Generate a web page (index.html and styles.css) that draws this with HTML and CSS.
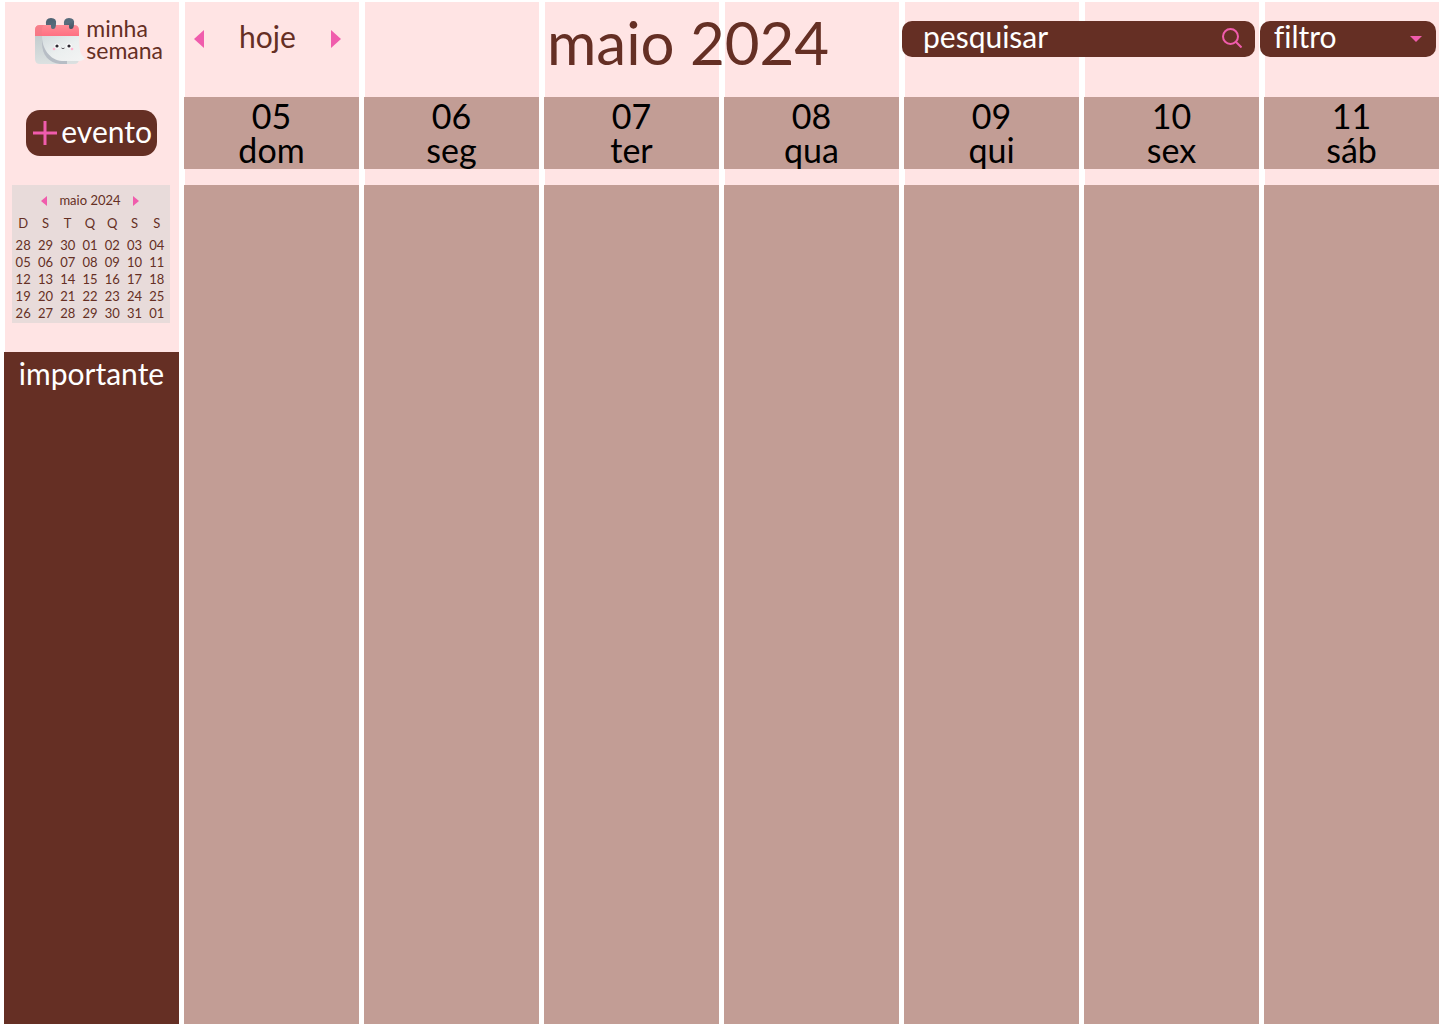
FILE: index.html
```html
<!DOCTYPE html>
<html lang="pt-BR">
<head>
<meta charset="utf-8">
<meta name="viewport" content="width=device-width, initial-scale=1">
<title>minha semana</title>
<link rel="stylesheet" href="styles.css">
</head>
<body>
<div class="board">
  <div class="stripe"></div><div class="stripe"></div><div class="stripe"></div><div class="stripe"></div>
  <div class="stripe"></div><div class="stripe"></div><div class="stripe"></div><div class="stripe"></div>

  <aside class="sidebar">
    <div class="brand">
      <svg class="brand-icon" width="50" height="48" viewBox="0 0 50 48" aria-hidden="true">
        <defs>
          <linearGradient id="back" x1="0" y1="0" x2="0" y2="1"><stop offset="0" stop-color="#c3ccce"/><stop offset="1" stop-color="#dce1e1"/></linearGradient>
          <linearGradient id="page" x1="0" y1="0" x2="1" y2="1"><stop offset="0" stop-color="#d3dbdd"/><stop offset="0.5" stop-color="#ebefef"/><stop offset="1" stop-color="#f4f4f4"/></linearGradient>
          <linearGradient id="red" x1="0" y1="0" x2="0" y2="1"><stop offset="0" stop-color="#ff8c96"/><stop offset="1" stop-color="#ff7082"/></linearGradient>
          <linearGradient id="ring" x1="0" y1="0" x2="1" y2="1"><stop offset="0" stop-color="#4b6070"/><stop offset="0.6" stop-color="#5a6e7e"/><stop offset="1" stop-color="#3f4d5d"/></linearGradient>
        </defs>
        <path d="M0 18h44v24q0 5-5 5H5q-5 0-5-5z" fill="url(#back)"/>
        <path d="M7 18v8c0 12 7 20 18 21h7V36z" fill="#b7bdc5"/>
        <path d="M7 19h37c0 12 1 19 6 22q-2 3-6 3H27C15 43 7 32 7 19z" fill="url(#page)"/>
        <path d="M5 8h34q5 0 5 5v6H0v-6q0-5 5-5z" fill="url(#red)"/>
        <path d="M9 8q-3 2-2 11H0v-6q0-5 5-5z" fill="#f27a85" opacity="0.6"/>
        <path d="M11 8q-1-7 5-7t5 6q0 5-3 5c-2 0-2-1-2-4h-5zM29 8q-1-7 5-7t5 6q0 5-3 5c-2 0-2-1-2-4h-5z" fill="url(#ring)"/>
        <circle cx="22" cy="29" r="2.6" fill="#fff"/><circle cx="34" cy="29" r="2.6" fill="#fff"/>
        <circle cx="22" cy="29" r="1.6" fill="#2b2730"/><circle cx="34" cy="29" r="1.6" fill="#2b2730"/>
        <circle cx="19" cy="32" r="1.3" fill="#ffb5cf"/><circle cx="37" cy="32" r="1.3" fill="#ffb5cf"/>
        <path d="M26.500 31q1.500 1.400 3 0" fill="none" stroke="#4d4852" stroke-width="0.9"/>
      </svg>
      <p class="brand-name">minha<br>semana</p>
    </div>

    <button class="add-event" type="button">
      <svg width="24" height="24" viewBox="0 0 24 24" aria-hidden="true"><path d="M12 0v24M0 12h24" stroke="#f05cac" stroke-width="3"/></svg>
      <span>evento</span>
    </button>

    <section class="mini">
      <div class="mini-head">
        <button class="arrow" type="button" aria-label="mês anterior"><svg width="6" height="10" viewBox="0 0 6 10"><path d="M6 0v10L0 5z"/></svg></button>
        <span>maio 2024</span>
        <button class="arrow" type="button" aria-label="próximo mês"><svg width="6" height="10" viewBox="0 0 6 10"><path d="M0 0v10l6-5z"/></svg></button>
      </div>
      <table class="mini-table">
        <thead><tr><th>D</th><th>S</th><th>T</th><th>Q</th><th>Q</th><th>S</th><th>S</th></tr></thead>
        <tbody>
          <tr><td>28</td><td>29</td><td>30</td><td>01</td><td>02</td><td>03</td><td>04</td></tr>
          <tr><td>05</td><td>06</td><td>07</td><td>08</td><td>09</td><td>10</td><td>11</td></tr>
          <tr><td>12</td><td>13</td><td>14</td><td>15</td><td>16</td><td>17</td><td>18</td></tr>
          <tr><td>19</td><td>20</td><td>21</td><td>22</td><td>23</td><td>24</td><td>25</td></tr>
          <tr><td>26</td><td>27</td><td>28</td><td>29</td><td>30</td><td>31</td><td>01</td></tr>
        </tbody>
      </table>
    </section>

    <section class="important"><h2>importante</h2></section>
  </aside>

  <nav class="week-nav">
    <button class="arrow" type="button" aria-label="semana anterior"><svg width="10" height="18" viewBox="0 0 10 18"><path d="M10 0v18L0 9z"/></svg></button>
    <button class="today" type="button">hoje</button>
    <button class="arrow" type="button" aria-label="próxima semana"><svg width="10" height="18" viewBox="0 0 10 18"><path d="M0 0v18l10-9z"/></svg></button>
  </nav>

  <h1 class="month">maio 2024</h1>

  <form class="tools">
    <div class="field search">
      <input type="search" placeholder="pesquisar" aria-label="pesquisar">
      <svg width="20" height="20" viewBox="0 0 20 20" aria-hidden="true"><g fill="none" stroke="#f05cac" stroke-width="2"><circle cx="8.500" cy="8.500" r="7.500"/><path d="M13.500 13.500l6 6"/></g></svg>
    </div>
    <div class="field filter">
      <select aria-label="filtro"><option>filtro</option></select>
      <svg width="12" height="6" viewBox="0 0 12 6" aria-hidden="true"><path d="M0 0h12L6 6z" fill="#f05cac"/></svg>
    </div>
  </form>

  <h2 class="day">05<br>dom</h2>
  <h2 class="day">06<br>seg</h2>
  <h2 class="day">07<br>ter</h2>
  <h2 class="day">08<br>qua</h2>
  <h2 class="day">09<br>qui</h2>
  <h2 class="day">10<br>sex</h2>
  <h2 class="day">11<br>sáb</h2>

  <div class="slot"></div><div class="slot"></div><div class="slot"></div><div class="slot"></div>
  <div class="slot"></div><div class="slot"></div><div class="slot"></div>
</div>
</body>
</html>
```
FILE: styles.css
```css
* { box-sizing: border-box; }

body {
  margin: 0;
  background: #fff;
  color: #652f24;
  font-family: Lato, "Liberation Sans", sans-serif;
  font-variant-ligatures: none;
}

h1, h2, p { margin: 0; font-weight: 400; }

button, input, select {
  margin: 0;
  padding: 0;
  border: 0;
  background: none;
  color: inherit;
  font: inherit;
  font-variant-ligatures: none;
}

svg { display: block; flex: none; }

.board {
  display: grid;
  grid-template-columns: repeat(8, minmax(0, 1fr));
  grid-template-rows: 95px 72px 16px 1fr;
  column-gap: 5px;
  min-height: 100vh;
  padding: 2px 1px 0 4px;
}

/* pale columns behind everything */
.stripe { grid-row: 1 / -1; margin-left: 1px; background: #ffe4e4; }
.stripe:nth-child(1) { grid-column: 1; }
.stripe:nth-child(2) { grid-column: 2; }
.stripe:nth-child(3) { grid-column: 3; }
.stripe:nth-child(4) { grid-column: 4; }
.stripe:nth-child(5) { grid-column: 5; }
.stripe:nth-child(6) { grid-column: 6; }
.stripe:nth-child(7) { grid-column: 7; }
.stripe:nth-child(8) { grid-column: 8; }

.sidebar {
  grid-area: 1 / 1 / -1 / 2;
  display: flex;
  flex-direction: column;
  align-items: center;
}

.brand {
  display: flex;
  gap: 1px;
  align-self: flex-end;
  height: 48px;
  margin: 15px 16px 0 0;
}
.brand-name { font-size: 23px; line-height: 22px; }

.add-event {
  display: flex;
  align-items: center;
  justify-content: flex-end;
  gap: 4px;
  height: 46px;
  width: 131px;
  margin-top: 45px;
  padding-right: 5px;
  border-radius: 14px;
  background: #652f24;
  color: #fff;
  font-size: 30px;
}
.add-event span { padding-bottom: 4px; }

.mini {
  align-self: stretch;
  margin: 29px 9px 0 8px;
  padding: 7px 2px 0 0;
  height: 138px;
  background: #e8dbda;
  font-size: 13px;
  line-height: 17px;
}
.mini-head { display: flex; justify-content: center; align-items: center; gap: 12px; }
.mini-table { width: 100%; border-collapse: collapse; table-layout: fixed; }
.mini-table th, .mini-table td { padding: 0; font-weight: 400; text-align: center; }
.mini-table th { padding: 6px 0 5px; line-height: 17px; }

.arrow { display: flex; fill: #f05cac; }

.important {
  flex: 1;
  align-self: stretch;
  margin-top: 29px;
  padding-top: 3px;
  background: #652f24;
  color: #fff;
  text-align: center;
}
.important h2 { font-size: 30px; line-height: 36px; }

.week-nav {
  grid-area: 1 / 2;
  display: flex;
  align-items: center;
  justify-content: space-between;
  align-self: start;
  height: 36px;
  margin: 19px 18px 0 10px;
}
.today { padding-bottom: 6px; font-size: 30px; }

.month {
  grid-area: 1 / 4 / 2 / 6;
  padding: 10px 0 0 3px;
  font-size: 60px;
  line-height: 60px;
  white-space: nowrap;
}

.tools {
  grid-area: 1 / 6 / 2 / 9;
  display: flex;
  gap: 5px;
  align-self: start;
  margin: 19px 3px 0 -2px;
  font-size: 30px;
}
.field {
  display: grid;
  align-items: center;
  height: 36px;
  border-radius: 10px;
  background: #652f24;
  color: #fff;
}
.field > * { grid-area: 1 / 1; }
.field svg { justify-self: end; pointer-events: none; }
.field input, .field select {
  width: 100%;
  height: 36px;
  padding-bottom: 6px;
  border-radius: 10px;
  appearance: none;
}
.search { flex: 2; }
.search input { padding-left: 21px; }
.search input::placeholder { color: #fff; opacity: 1; }
.search svg { margin: 0 13px 2px 0; }
.filter { flex: 1; }
.filter select { padding-left: 14px; line-height: 30px; }
.filter svg { margin-right: 14px; }

.day {
  grid-row: 2;
  padding-top: 2px;
  background: #c29d95;
  color: #000;
  font-size: 34px;
  line-height: 34px;
  text-align: center;
}
.slot { grid-row: 4; background: #c29d95; }
.day:nth-of-type(1), .slot:nth-last-child(7) { grid-column: 2; }
.day:nth-of-type(2), .slot:nth-last-child(6) { grid-column: 3; }
.day:nth-of-type(3), .slot:nth-last-child(5) { grid-column: 4; }
.day:nth-of-type(4), .slot:nth-last-child(4) { grid-column: 5; }
.day:nth-of-type(5), .slot:nth-last-child(3) { grid-column: 6; }
.day:nth-of-type(6), .slot:nth-last-child(2) { grid-column: 7; }
.day:nth-of-type(7), .slot:nth-last-child(1) { grid-column: 8; }
```
